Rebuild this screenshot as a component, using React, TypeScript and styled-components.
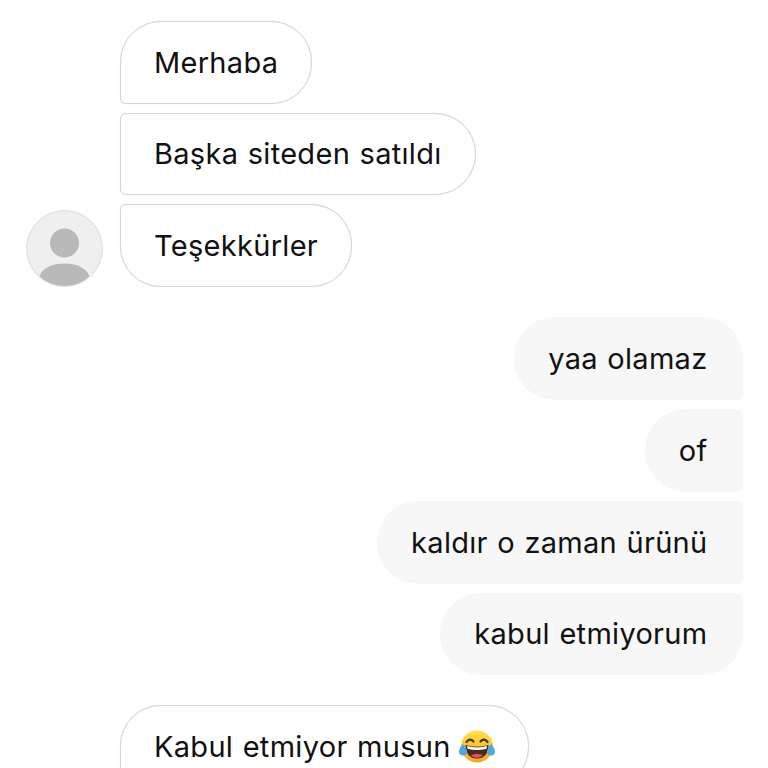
import React from 'react'
import styled, { createGlobalStyle } from 'styled-components'

const GlobalStyle = createGlobalStyle`
    html, body {
        margin: 0;
        height: 768px;
        overflow: hidden;
        background: #ffffff;
    }
`

const Thread = styled.div`
    display: flex;
    flex-direction: column;
    width: 768px;
    height: 768px;
    padding: 20.8px 25px 0 25.5px;
    box-sizing: border-box;
    overflow: hidden;
    font-family: Inter, 'Liberation Sans', sans-serif;
    font-size: 29px;
    line-height: 35px;
    letter-spacing: 0.3px;
    word-spacing: 1px;
    color: #111111;
`

const Group = styled.div<{ $side: 'in' | 'out'; $after?: number }>`
    display: flex;
    flex-direction: column;
    gap: 9px;
    align-items: ${(p) => (p.$side === 'in' ? 'flex-start' : 'flex-end')};
    margin-bottom: ${(p) => p.$after ?? 0}px;
`

const IncomingRow = styled.div`
    display: flex;
    align-items: flex-end;
    gap: 17.5px;
`

const AvatarSlot = styled.div`
    width: 77px;
    height: 77px;
    flex: none;
`

const Avatar = styled.div`
    width: 77px;
    height: 77px;
    box-sizing: border-box;
    border-radius: 50%;
    background: #efeff0;
    border: 1px solid #dcdcdc;
    overflow: hidden;
    display: flex;
`

const Bubble = styled.div<{ $side: 'in' | 'out'; $corners: string }>`
    box-sizing: border-box;
    height: 82.8px;
    display: flex;
    align-items: center;
    gap: 8px;
    white-space: nowrap;
    border-radius: ${(p) => p.$corners};
    padding: ${(p) => (p.$side === 'in' ? '0 33px' : '0 35.5px 0 34px')};
    background: ${(p) => (p.$side === 'in' ? '#ffffff' : '#f7f7f7')};
    border: ${(p) => (p.$side === 'in' ? '1px solid #d6d6d6' : 'none')};
    box-shadow: ${(p) => (p.$side === 'in' ? '0 0 1px #d8d8d8' : 'none')};
`

const PersonIcon = () => (
    <svg width="75" height="75" viewBox="0 0 75 75">
        <circle cx="37.5" cy="32" r="14.5" fill="#b9b9b9" />
        <ellipse cx="37.5" cy="67" rx="25" ry="14.5" fill="#b9b9b9" />
    </svg>
)

const LaughEmoji = () => (
    <svg width="36" height="33" viewBox="0 0 36 33">
        <defs>
            <linearGradient id="laugh-face" x1="0" y1="0" x2="0" y2="1">
                <stop offset="0" stopColor="#fde047" />
                <stop offset="1" stopColor="#f6a623" />
            </linearGradient>
        </defs>
        <circle cx="18" cy="16.5" r="16" fill="url(#laugh-face)" />
        <path d="M7.5 12q3.5-4.5 7-.5M21.5 11.5q3.500-4 7 .5" fill="none" stroke="#4a3322" strokeWidth="2.2" strokeLinecap="round" />
        <path d="M6.5 15q11.500 3.500 23 0q-.5 13.500-11.500 13.500t-11.500-13.500z" fill="#4a2a1c" />
        <path d="M8 16q10 2.800 20 0l-.6 2.800q-9.400 2.400-18.800 0z" fill="#ffffff" />
        <path d="M12 25.500q6-3.500 12 0q-6 4.500-12 0z" fill="#e8505b" />
        <path d="M3.800 14q-3.800 4.500-3.800 7.500a4 4 0 0 0 8 0q0-3-4.200-7.500zM32.200 14q3.800 4.500 3.800 7.500a4 4 0 0 1-8 0q0-3 4.200-7.500z" fill="#4aa8e8" />
    </svg>
)

const App = () => (
    <Thread>
        <GlobalStyle />
        <Group $side="in" $after={30}>
            <IncomingRow>
                <AvatarSlot />
                <Bubble $side="in" $corners="41px 41px 41px 6px">Merhaba</Bubble>
            </IncomingRow>
            <IncomingRow>
                <AvatarSlot />
                <Bubble $side="in" $corners="6px 41px 41px 6px">Başka siteden satıldı</Bubble>
            </IncomingRow>
            <IncomingRow>
                <Avatar>
                    <PersonIcon />
                </Avatar>
                <Bubble $side="in" $corners="6px 41px 41px 41px">Teşekkürler</Bubble>
            </IncomingRow>
        </Group>
        <Group $side="out" $after={30}>
            <Bubble $side="out" $corners="41px 41px 6px 41px">yaa olamaz</Bubble>
            <Bubble $side="out" $corners="41px 6px 6px 41px">of</Bubble>
            <Bubble $side="out" $corners="41px 6px 6px 41px">kaldır o zaman ürünü</Bubble>
            <Bubble $side="out" $corners="41px 6px 41px 41px">kabul etmiyorum</Bubble>
        </Group>
        <Group $side="in">
            <IncomingRow>
                <AvatarSlot />
                <Bubble $side="in" $corners="41px 41px 41px 6px">
                    Kabul etmiyor musun
                    <LaughEmoji />
                </Bubble>
            </IncomingRow>
        </Group>
    </Thread>
)

export default App
